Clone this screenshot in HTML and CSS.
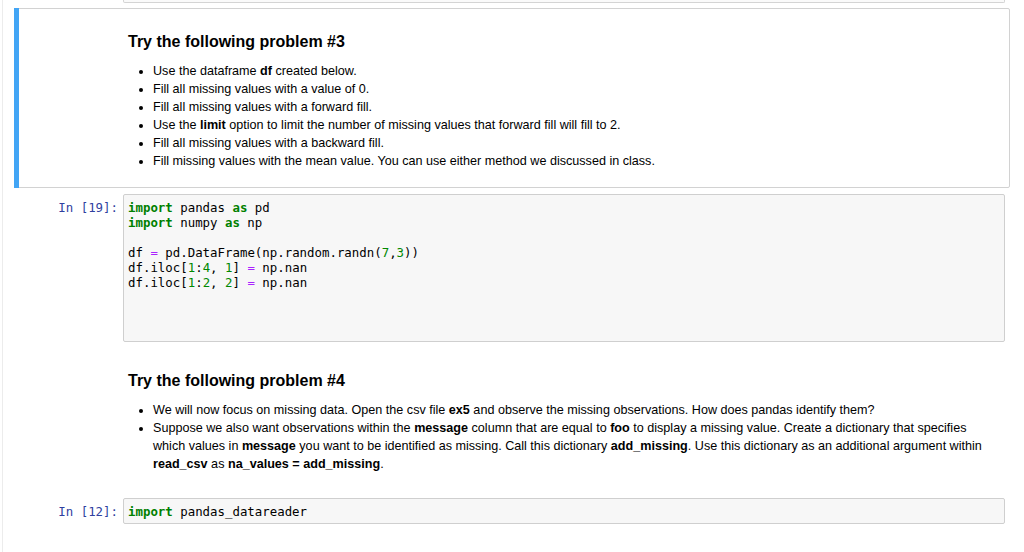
FILE: index.html
```html
<!DOCTYPE html>
<html lang="en">
<head>
<meta charset="utf-8">
<title>Notebook</title>
<link rel="stylesheet" href="styles.css">
</head>
<body>
<div class="notebook">
  <div class="prev-tail"></div>

  <div class="cell text-cell selected">
    <div class="prompt"></div>
    <div class="rendered">
      <h3>Try the following problem #3</h3>
      <ul>
        <li>Use the dataframe <b>df</b> created below.</li>
        <li>Fill all missing values with a value of 0.</li>
        <li>Fill all missing values with a forward fill.</li>
        <li>Use the <b>limit</b> option to limit the number of missing values that forward fill will fill to 2.</li>
        <li>Fill all missing values with a backward fill.</li>
        <li>Fill missing values with the mean value. You can use either method we discussed in class.</li>
      </ul>
    </div>
  </div>

  <div class="cell code-cell">
    <div class="prompt in">In&nbsp;[19]:</div>
    <div class="input-area tall">
      <div class="code">
        <div class="line"><span class="kw">import</span> pandas <span class="kw">as</span> pd</div>
        <div class="line"><span class="kw">import</span> numpy <span class="kw">as</span> np</div>
        <div class="line"></div>
        <div class="line">df <span class="op">=</span> pd.DataFrame(np.random.randn(<span class="num">7</span>,<span class="num">3</span>))</div>
        <div class="line">df.iloc[<span class="num">1</span>:<span class="num">4</span>, <span class="num">1</span>] <span class="op">=</span> np.nan</div>
        <div class="line">df.iloc[<span class="num">1</span>:<span class="num">2</span>, <span class="num">2</span>] <span class="op">=</span> np.nan</div>
      </div>
    </div>
  </div>

  <div class="cell text-cell second">
    <div class="prompt"></div>
    <div class="rendered">
      <h3>Try the following problem #4</h3>
      <ul>
        <li>We will now focus on missing data. Open the csv file <b>ex5</b> and observe the missing observations. How does pandas identify them?</li>
        <li>Suppose we also want observations within the <b>message</b> column that are equal to <b>foo</b> to display a missing value. Create a dictionary that specifies which values in <b>message</b> you want to be identified as missing. Call this dictionary <b>add_missing</b>. Use this dictionary as an additional argument within <b>read_csv</b> as <b>na_values = add_missing</b>.</li>
      </ul>
    </div>
  </div>

  <div class="cell code-cell last">
    <div class="prompt in">In&nbsp;[12]:</div>
    <div class="input-area">
      <div class="code">
        <div class="line"><span class="kw">import</span> pandas_datareader</div>
      </div>
    </div>
  </div>
</div>
</body>
</html>
```
FILE: styles.css
```css
html, body {
  margin: 0;
  padding: 0;
  background: #ffffff;
}

body {
  width: 1024px;
  height: 552px;
  overflow: hidden;
  font-family: "Liberation Sans", Arial, Helvetica, sans-serif;
  color: #000;
}

.notebook {
  margin-left: 2px;
  border-left: 1px solid #ececec;
  height: 552px;
  padding-left: 11px;
  box-sizing: border-box;
}

.prev-tail {
  margin-left: 109px;
  width: 880px;
  height: 2px;
  border: 1px solid #d4d4d4;
  border-top: none;
  border-radius: 0 0 2px 2px;
  background: #fafafa;
}

.cell {
  display: flex;
  width: 996px;
  box-sizing: border-box;
}

.prompt {
  width: 104px;
  flex: none;
  box-sizing: border-box;
  padding-right: 5px;
  text-align: right;
  font-family: "DejaVu Sans Mono", monospace;
  font-size: 12.4px;
  line-height: 15px;
}

.prompt.in {
  color: #303f9f;
  padding-top: 6px;
}

.text-cell.selected {
  margin-top: 5px;
  height: 180px;
  border: 1px solid #d2d2d2;
  border-radius: 2px;
  position: relative;
}

.text-cell.selected::before {
  content: "";
  position: absolute;
  left: -1px;
  top: -1px;
  bottom: -1px;
  width: 5px;
  background: #42a5f5;
}

.text-cell.selected .prompt {
  width: 108px;
}

.rendered {
  flex: 1;
  padding-left: 5px;
  padding-right: 12px;
  font-size: 12.6px;
}

.selected .rendered {
  padding-top: 23px;
}

.second {
  margin-top: 29px;
  padding-left: 1px;
}

.second .prompt {
  width: 108px;
}

.rendered h3 {
  margin: 0 0 10px 0;
  font-size: 16px;
  line-height: 20px;
  font-weight: bold;
}

.rendered ul {
  margin: 0;
  padding-left: 25px;
}

.rendered li {
  line-height: 18px;
}

.code-cell {
  margin-top: 6px;
  padding-left: 5px;
}

.input-area {
  flex: none;
  width: 882px;
  box-sizing: border-box;
  border: 1px solid #cfcfcf;
  border-radius: 2px;
  background: #f7f7f7;
}

.input-area.tall {
  height: 148px;
}

.code {
  padding: 5px 4px 4px 4px;
  font-family: "DejaVu Sans Mono", Menlo, monospace;
  font-size: 12.4px;
  line-height: 15px;
  color: #000;
}

.line {
  height: 15px;
  white-space: pre;
}

.kw {
  color: #008000;
  font-weight: bold;
}

.op {
  color: #aa22ff;
}

.num {
  color: #008800;
}

.last {
  margin-top: 25px;
}
```
